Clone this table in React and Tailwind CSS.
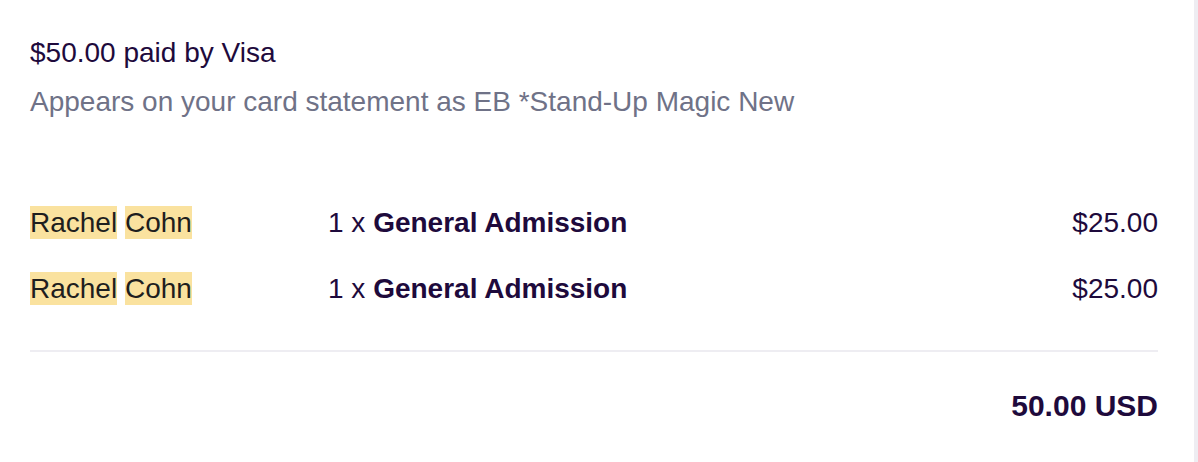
import React from "react";

const tickets = [
  { first: "Rachel", last: "Cohn", qty: 1, type: "General Admission", price: "$25.00" },
  { first: "Rachel", last: "Cohn", qty: 1, type: "General Admission", price: "$25.00" },
];

const App = () => {
  return (
    <div
      className="flex h-[462px] w-[1198px] overflow-hidden bg-white"
      style={{ fontFamily: '"Liberation Sans", Arial, Helvetica, sans-serif' }}
    >
      <div className="w-[1194px] pl-[30px] pr-[36px] pt-[35px] text-[28px]">
        {/* Payment summary */}
        <p className="leading-[36px] text-[#1e0a3c]">$50.00 paid by Visa</p>
        <p className="mt-[13px] leading-[36px] text-[#6f7287]">
          Appears on your card statement as EB *Stand-Up Magic New
        </p>

        {/* Ticket rows */}
        <div className="mt-[70px]">
          {tickets.map((t, i) => (
            <div key={i} className="flex h-[66px] items-center">
              <div className="w-[298px] text-[#1e1e1e]">
                <span className="inline-block h-[33px] bg-[#fae29f] leading-[33px]">{t.first}</span>{" "}
                <span className="inline-block h-[33px] bg-[#fae29f] leading-[33px]">{t.last}</span>
              </div>
              <div className="flex-1 text-[#1e0a3c]">
                {t.qty} x <strong className="font-bold">{t.type}</strong>
              </div>
              <div className="text-[#1e0a3c]">{t.price}</div>
            </div>
          ))}
        </div>

        <div className="mt-[28px] h-[2px] bg-[#eeedf2]" />

        {/* Total */}
        <div className="mt-[36px] text-right text-[30px] font-bold leading-[36px] text-[#1e0a3c]">
          50.00 USD
        </div>

        <p className="mt-[31px] leading-[36px] text-[#6f7287]">
          <a className="text-[#3659e3]">View and manage order</a> in your Eventbrite account
        </p>
      </div>
      <div className="w-[4px] bg-[#eeedf2]" />
    </div>
  );
};

export default App;
